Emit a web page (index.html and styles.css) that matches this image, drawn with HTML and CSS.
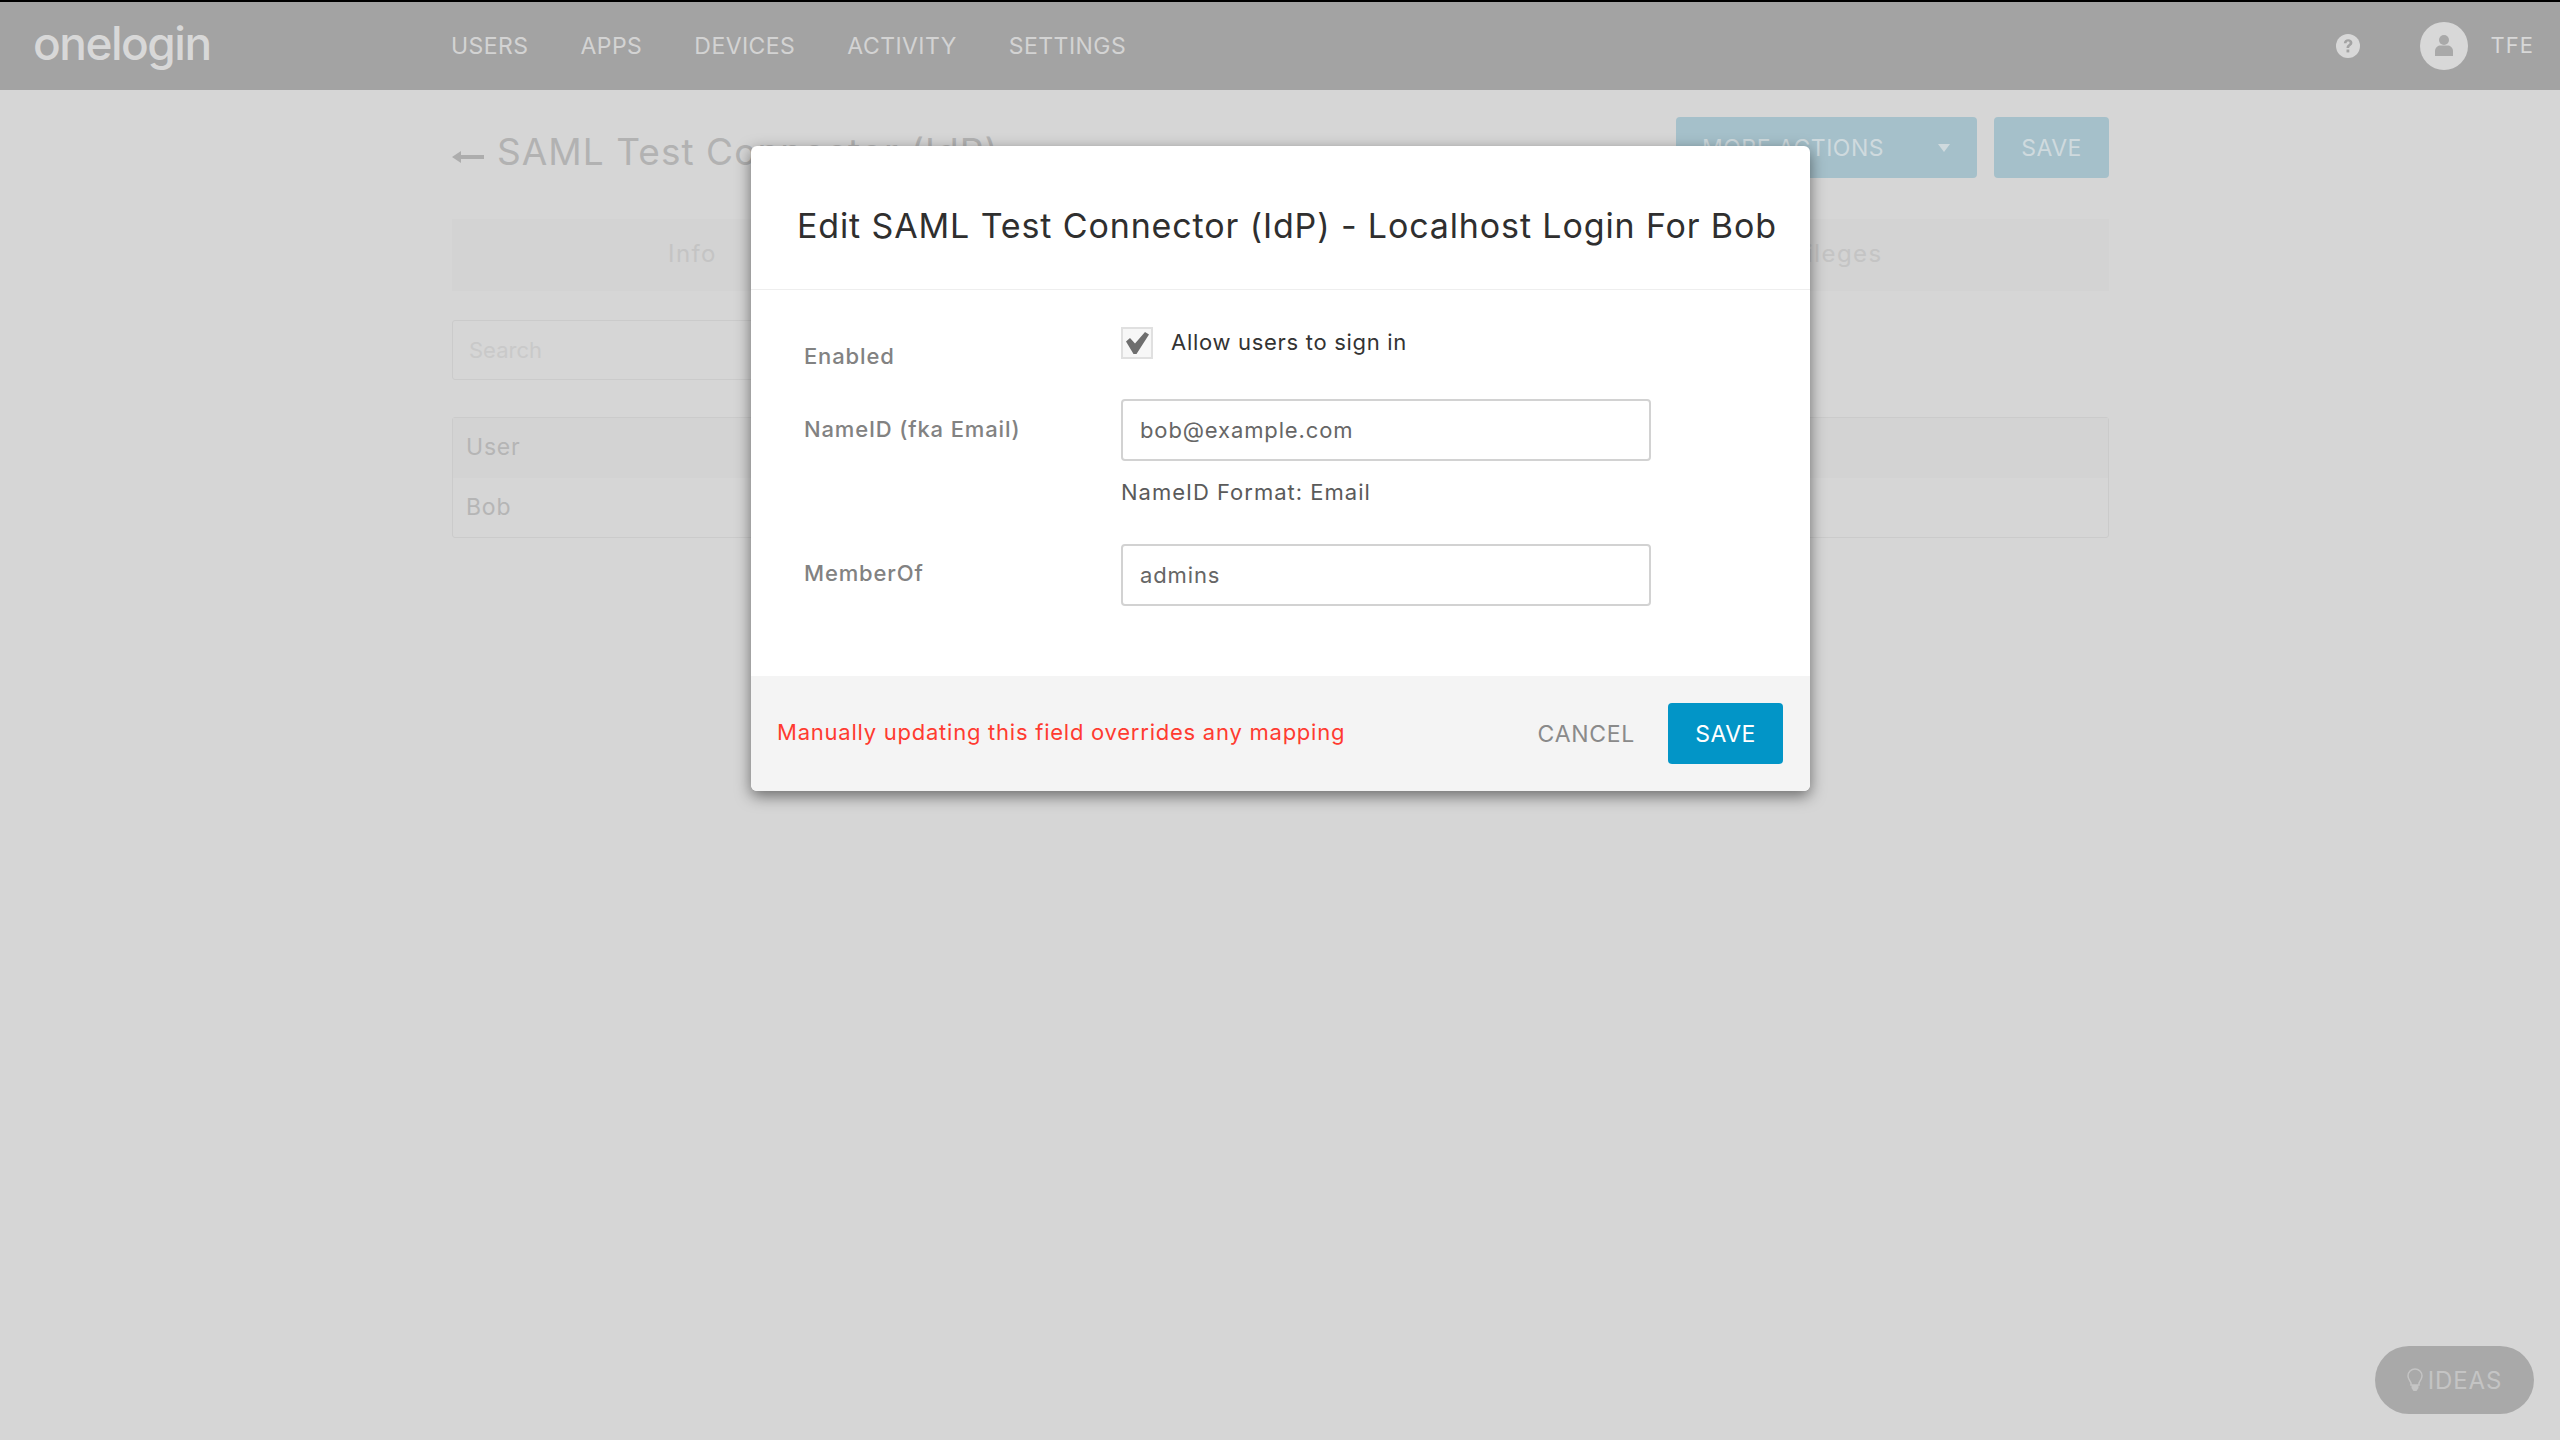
FILE: index.html
```html
<!DOCTYPE html>
<html lang="en">
<head>
<meta charset="utf-8">
<title>Edit SAML Test Connector</title>
<link rel="stylesheet" href="styles.css">
</head>
<body>
<header class="topbar">
  <div class="logo">onelogin</div>
  <nav class="nav">
    <span>USERS</span><span>APPS</span><span>DEVICES</span><span>ACTIVITY</span><span>SETTINGS</span>
  </nav>
  <div class="top-right">
    <svg class="help" viewBox="0 0 24 24" width="24" height="24"><circle cx="12" cy="12" r="12" fill="#d8d8d8"/><path d="M7.8 9.2c.2-2.6 2-3.9 4.4-3.9 2.500 0 4.200 1.400 4.200 3.500 0 1.600-.9 2.400-2 3.200-.9.600-1.200 1-1.200 2.100h-2.700c0-1.900.5-2.800 1.800-3.700.8-.6 1.300-1 1.300-1.700 0-.8-.6-1.300-1.400-1.300-1 0-1.600.6-1.700 1.800z" fill="#a3a3a3"/><rect x="10.500" y="15.500" width="2.800" height="2.900" fill="#a3a3a3"/></svg>
    <svg class="avatar" viewBox="0 0 48 48" width="48" height="48"><circle cx="24" cy="24" r="24" fill="#d8d8d8"/><circle cx="24" cy="18" r="5" fill="#a9a9a9"/><path d="M15 34v-5c0-3.500 3-5.500 5.500-5.500h7c2.500 0 5.500 2 5.500 5.500v5z" fill="#a9a9a9"/></svg>
    <span class="user">TFE</span>
  </div>
</header>

<main class="page">
  <div class="title-row">
    <h1 class="page-title"><span class="arrow"><svg viewBox="0 0 32 14" width="32" height="14"><path d="M0 7l9-6v4h23v4H9v4z" fill="#adadad"/></svg></span>SAML Test Connector (IdP)</h1>
    <div class="actions">
      <div class="btn btn-more"><span>MORE ACTIONS</span><i class="caret"></i></div>
      <div class="btn btn-save">SAVE</div>
    </div>
  </div>
  <div class="tabs"><span>Info</span><span>Applications</span><span>Roles</span><span>Privileges</span></div>
  <div class="search">Search</div>
  <div class="table">
    <div class="thead">User</div>
    <div class="trow">Bob</div>
  </div>
</main>

<section class="modal">
  <h2 class="modal-title">Edit SAML Test Connector (IdP) - Localhost Login For Bob</h2>
  <div class="modal-body">
    <div class="row row-enabled">
      <label class="field-label">Enabled</label>
      <div class="check-wrap">
        <span class="checkbox"><svg viewBox="0 0 28 28" width="28" height="28"><path d="M3 12.500l4-3.500 5 5.500L22 3l4 2.500L13.500 25h-3z" fill="#6e6e6e"/></svg></span>
        <span class="check-text">Allow users to sign in</span>
      </div>
    </div>
    <div class="row row-name">
      <label class="field-label">NameID (fka Email)</label>
      <div class="field">
        <div class="input">bob@example.com</div>
        <div class="hint">NameID Format: Email</div>
      </div>
    </div>
    <div class="row row-member">
      <label class="field-label">MemberOf</label>
      <div class="field"><div class="input">admins</div></div>
    </div>
  </div>
  <footer class="modal-foot">
    <span class="warning">Manually updating this field overrides any mapping</span>
    <span class="cancel">CANCEL</span>
    <span class="save">SAVE</span>
  </footer>
</section>

<div class="ideas">
  <svg viewBox="0 0 16 24" width="16" height="24"><path d="M8 1a7 7 0 0 0-7 7c0 3 2 4.500 3 7v2h8v-2c1-2.500 3-4 3-7a7 7 0 0 0-7-7z" fill="none" stroke="#c4c4c4" stroke-width="1.500"/><path d="M4.500 17h7v3l-2 3h-3l-2-3z" fill="#c4c4c4"/></svg>
  <span>IDEAS</span>
</div>
</body>
</html>
```
FILE: styles.css
```css
* { box-sizing: border-box; }
html, body { margin: 0; height: 100%; }
body {
  background: #d6d6d6;
  font-family: Inter, "Liberation Sans", sans-serif;
  height: 1440px;
  overflow: hidden;
  position: relative;
  color: #333;
}
.topbar {
  height: 90px;
  border-top: 2px solid #000;
  background: #a3a3a3;
  display: flex;
  align-items: center;
}
.logo {
  width: 451px;
  padding-left: 33px;
  font-size: 46px;
  font-weight: 500;
  letter-spacing: -1.5px;
  color: #d8d8d8;
  line-height: 1;
  margin-top: -6px;
}
.nav { display: flex; gap: 52px; font-size: 23px; color: #d3d3d3; letter-spacing: .45px; }
.top-right { margin-left: auto; display: flex; align-items: center; padding-right: 26px; color: #d8d8d8; }
.help { margin-right: 60px; }
.avatar { margin-right: 23px; }
.user { font-size: 22px; margin-top: -2px; letter-spacing: 1px; }

.page { width: 1657px; margin-left: 452px; }
.title-row { display: flex; justify-content: space-between; height: 129px; padding-top: 27px; }
.page-title { margin: 0; display: flex; align-items: center; height: 68px; font-weight: 400; font-size: 37px; color: #b2b2b2; letter-spacing: 1.05px; }
.arrow { margin-right: 13px; display: flex; margin-top: 12px; }
.actions { display: flex; gap: 17px; height: 61px; }
.btn {
  background: #a5c0ca; color: #cfdade; font-size: 23px; letter-spacing: .5px;
  border-radius: 4px; display: flex; align-items: center;
}
.btn-more { width: 301px; padding: 0 26px; justify-content: space-between; }
.btn-save { width: 115px; justify-content: center; }
.caret { width: 0; height: 0; border: 6px solid transparent; border-top: 8px solid #cfdade; border-bottom: 0; margin-right: 1px; }
.tabs { height: 72px; background: #d3d3d3; display: grid; grid-template-columns: 481px 1fr 1fr 578px; align-items: center; text-align: center; color: #c4c4c4; font-size: 24px; letter-spacing: 1.4px; }
.tabs span { margin-top: -4px; }
.search { margin-top: 29px; width: 600px; height: 60px; border: 1px solid #cbcbcb; border-radius: 3px; padding: 0 16px; display: flex; align-items: center; font-size: 22px; color: #c9c9c9; }
.table { margin-top: 37px; height: 121px; border: 1px solid #cbcbcb; border-radius: 3px; font-size: 23px; letter-spacing: .8px; color: #b5b5b5; }
.thead { height: 60px; background: #d3d3d3; padding-left: 13px; display: flex; align-items: center; padding-bottom: 2px; }
.trow { height: 60px; padding-left: 13px; display: flex; align-items: center; padding-bottom: 2px; }

.modal {
  position: absolute; left: 751px; top: 146px; width: 1059px; height: 645px;
  background: #fff; border-radius: 6px; box-shadow: 0 5px 15px rgba(0,0,0,.5);
  display: flex; flex-direction: column; overflow: hidden;
}
.modal-title { margin: 0; height: 144px; padding: 15px 0 0 46px; display: flex; align-items: center; white-space: nowrap; font-weight: 400; font-size: 34px; letter-spacing: .87px; color: #2f2f2f; border-bottom: 1px solid #eee; flex: none; }
.modal-body { flex: 1; padding: 0 54px 0 53px; }
.row { display: flex; }
.field-label { width: 317px; flex: none; font-size: 22px; font-weight: 500; letter-spacing: .85px; color: #828282; }
.row-enabled { padding-top: 37px; height: 109px; }
.row-enabled .field-label { padding-top: 16px; }
.check-wrap { display: flex; align-items: flex-start; }
.checkbox { width: 32px; height: 32px; border: 2px solid #e0e0e0; background: #f7f7f7; display: flex; align-items: center; justify-content: center; }
.check-text { margin-left: 18px; font-size: 22px; line-height: 30px; letter-spacing: .7px; color: #333; }
.row-name { height: 145px; }
.row-name .field-label { padding-top: 17px; }
.row-member .field-label { padding-top: 16px; }
.input { width: 530px; height: 62px; border: 2px solid #d2d2d2; border-radius: 4px; padding: 0 17px; display: flex; align-items: center; font-size: 22px; letter-spacing: .87px; color: #666; }
.hint { margin-top: 18px; font-size: 22px; letter-spacing: 1px; color: #5a5a5a; }
.modal-foot { height: 115px; flex: none; background: #f4f4f4; display: flex; align-items: center; padding: 0 27px 0 27px; }
.warning { color: #ff3b30; font-size: 22px; letter-spacing: .76px; margin-top: -3px; margin-left: -1px; }
.cancel { margin-left: auto; margin-right: 33px; font-size: 23px; color: #8a8a8a; letter-spacing: .7px; }
.save { width: 115px; height: 61px; background: #0295c7; color: #fff; font-size: 23px; border-radius: 4px; display: flex; align-items: center; justify-content: center; letter-spacing: .5px; }

.ideas {
  position: absolute; left: 2375px; top: 1346px; width: 159px; height: 68px; border-radius: 34px;
  background: #a9a9a9; color: #c4c4c4; display: flex; align-items: center; justify-content: center; gap: 5px; font-size: 24px; letter-spacing: .9px;
}
```
